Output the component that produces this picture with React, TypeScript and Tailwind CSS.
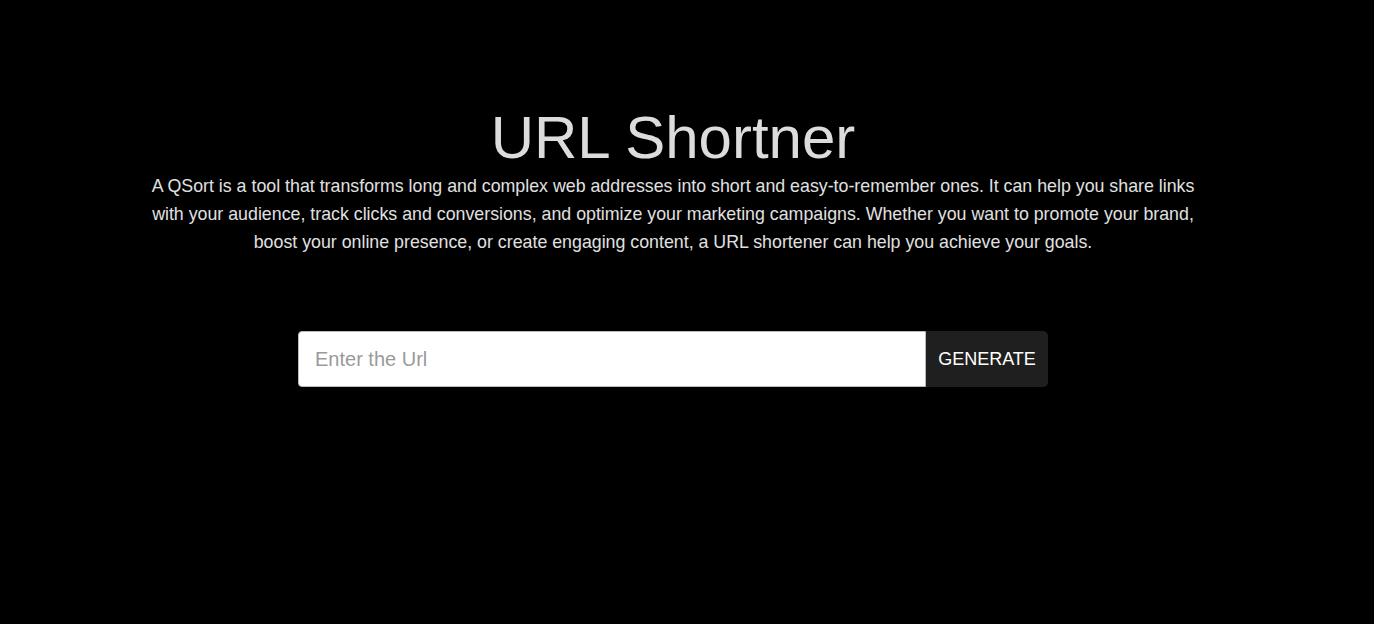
export default function App() {
  return (
    <div className="min-h-[624px] w-full bg-black font-['Liberation_Sans',Arial,sans-serif]">
      <div className="flex flex-col items-center pr-[28px] pt-[103px]">
        <h1 className="text-[60px] leading-[69px] text-[#dcdcdc]">URL Shortner</h1>
        <p className="w-[1060px] text-center text-[17.8px] leading-[28px] text-[#e0e0e0]">
          A QSort is a tool that transforms long and complex web addresses into short and easy-to-remember ones. It can
          help you share links with your audience, track clicks and conversions, and optimize your marketing campaigns.
          Whether you want to promote your brand, boost your online presence, or create engaging content, a URL
          shortener can help you achieve your goals.
        </p>
        <div className="mt-[75px] flex w-[750px]">
          <input
            type="text"
            placeholder="Enter the Url"
            className="h-[56px] flex-1 rounded-l-[4px] border border-[#bbbbbb] bg-white px-4 text-[20px] text-black outline-none placeholder:text-[#9a9a9a]"
          />
          <button className="h-[56px] w-[122px] rounded-r-[5px] bg-[#1f1f1f] text-[18px] text-white">GENERATE</button>
        </div>
      </div>
    </div>
  );
}
